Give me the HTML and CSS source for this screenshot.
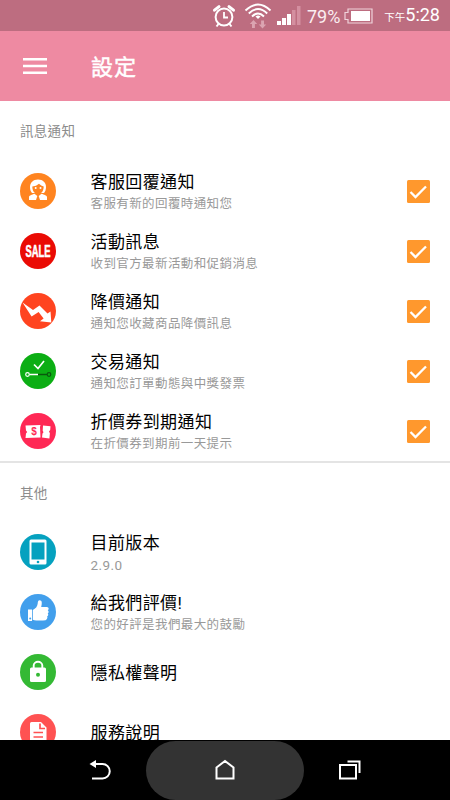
FILE: index.html
```html
<!DOCTYPE html>
<html lang="zh-Hant">
  <head>
    <meta charset="utf-8">
    <title>設定</title>
    <link rel="stylesheet" href="styles.css">
  </head>
<body>

<div class="status-bar">
  <svg class="alarm" width="24" height="24" viewBox="0 0 24 24" fill="none" stroke="#fff">
    <circle cx="12" cy="13" r="8.4" stroke-width="2"/>
    <path d="M12 8v5.5h4" stroke-width="1.8"/>
    <path d="M2.500 6.200L7 2.600M21.500 6.200L17 2.600" stroke-width="3" stroke-linecap="round"/>
    <path d="M6.500 20l-2 2.500M17.500 20l2 2.500" stroke-width="2"/>
  </svg>
  <svg class="wifi" width="28" height="27" viewBox="0 0 28 27" fill="none" stroke="#fff" stroke-width="1.900">
    <path d="M1.500 8.500Q14-3.500 26.500 8.500M4.800 11.500Q14 2.500 23.200 11.500M8 14.500Q14 8.500 20 14.500"/>
    <path d="M11.500 14.500Q14 12.500 16.500 14.500L14 17z" fill="#fff" stroke="none"/>
    <path d="M9.500 18l3.700 4h-2.300v4H8v-4H5.800zM18.500 26.500l-3.700-4h2.300v-4H20v4h2.200z" fill="#dba4b1" stroke="none"/>
  </svg>
  <svg class="signal" width="24" height="20" viewBox="0 0 24 20">
    <path d="M0 15h4v4H0zM5 12h4v7H5zM10 8h4v11h-4z" fill="#fff"/>
    <path d="M15 4h3.500v15H15zM20 0h3.500v19H20z" fill="#d48fa0"/>
  </svg>
  <span class="percent">79%</span>
  <svg class="battery" width="29" height="16" viewBox="0 0 29 16">
    <path d="M4 1h24v14H4v-3.500H1v-7h3z" fill="none" stroke="#efd3da" stroke-width="1.200"/>
    <path d="M7 3h19v10H7z" fill="#fff"/>
  </svg>
  <span class="clock"><small>下午</small>5:28</span>
</div>

<div class="toolbar">
  <svg class="menu" width="24" height="18" viewBox="0 0 24 18">
    <path d="M0 1h24v2.500H0zM0 7.700h24v2.500H0zM0 14.400h24v2.500H0z" fill="#fff"/>
  </svg>
  <h1>設定</h1>
</div>

<div class="content">
  <h2>訊息通知</h2>
  <ul class="list">
    <li>
      <svg class="icon" viewBox="0 0 36 36">
        <circle cx="18" cy="18" r="18" fill="#ff8420"/>
        <path d="M18 6.500c5 0 8 3.300 8 7.500 0 2.500-.7 4.500-2 6H12c-1.300-1.500-2-3.500-2-6 0-4.200 3-7.500 8-7.500z" fill="#fff"/>
        <path d="M12.300 13.500q4-.3 6.700-2.800 2 2.300 4.700 2.800c0 4.500-2.200 7.500-5.700 7.500s-5.700-3-5.700-7.500z" fill="#ff8420"/>
        <circle cx="15.700" cy="15" r="1" fill="#fff"/>
        <circle cx="20.500" cy="15" r="1" fill="#fff"/>
        <path d="M9 27v-3c0-1.500 3-2.200 5.500-3.200L17.300 23l-1.300 4zM27 27v-3c0-1.500-3-2.200-5.500-3.200L18.700 23l1.300 4z" fill="#fff"/>
      </svg>
      <div class="text"><h3>客服回覆通知</h3><p>客服有新的回覆時通知您</p></div>
      <svg class="check" viewBox="0 0 23 23"><rect width="23" height="23" rx="1.500" fill="#ff982d"/><path d="M3.500 12l5 5L19 6.500" fill="none" stroke="#fff" stroke-width="2.300"/></svg>
    </li>
    <li>
      <svg class="icon" viewBox="0 0 36 36">
        <circle cx="18" cy="18" r="18" fill="#ea0b04"/>
        <text class="sale" x="5.500" y="23.700" textLength="25" lengthAdjust="spacingAndGlyphs">SALE</text>
      </svg>
      <div class="text"><h3>活動訊息</h3><p>收到官方最新活動和促銷消息</p></div>
      <svg class="check" viewBox="0 0 23 23"><rect width="23" height="23" rx="1.500" fill="#ff982d"/><path d="M3.500 12l5 5L19 6.500" fill="none" stroke="#fff" stroke-width="2.300"/></svg>
    </li>
    <li>
      <svg class="icon" viewBox="0 0 36 36">
        <circle cx="18" cy="18" r="18" fill="#ff4420"/>
        <path d="M2.500 9.500L13 17l6.500-4.500 8 8 3-2 .8 11-11.300-1.300 3.600-2.700-5-6.500-7 4.500z" fill="#fff"/>
      </svg>
      <div class="text"><h3>降價通知</h3><p>通知您收藏商品降價訊息</p></div>
      <svg class="check" viewBox="0 0 23 23"><rect width="23" height="23" rx="1.500" fill="#ff982d"/><path d="M3.500 12l5 5L19 6.500" fill="none" stroke="#fff" stroke-width="2.300"/></svg>
    </li>
    <li>
      <svg class="icon" viewBox="0 0 36 36" fill="none">
        <circle cx="18" cy="18" r="18" fill="#0cae14"/>
        <path d="M14 11.500l4 4 6-7.500" stroke="#fff" stroke-width="1.700"/>
        <path d="M9.500 21.500H18" stroke="#fff" stroke-width="1.500"/>
        <circle cx="7.500" cy="21.500" r="1.800" stroke="#fff" stroke-width="1.200"/>
        <path d="M18 21.500h9" stroke="#09590d" stroke-width="1.500"/>
        <circle cx="29" cy="21.500" r="1.800" stroke="#09590d" stroke-width="1.200"/>
      </svg>
      <div class="text"><h3>交易通知</h3><p>通知您訂單動態與中獎發票</p></div>
      <svg class="check" viewBox="0 0 23 23"><rect width="23" height="23" rx="1.500" fill="#ff982d"/><path d="M3.500 12l5 5L19 6.500" fill="none" stroke="#fff" stroke-width="2.300"/></svg>
    </li>
    <li>
      <svg class="icon" viewBox="0 0 36 36">
        <circle cx="18" cy="18" r="18" fill="#ff2855"/>
        <path d="M5.500 12.500l15-.5-.5 2 .5 10.500-15 .5.500-4.500 1.200-1.500-1.200-1.500zM23 12.500l7.500.8-.3 3.700-1.200 1.500.9 1.700-.5 5.300-7.400-1 .5-4 1-1.200-.8-1.500z" fill="#fff"/>
        <text class="dollar" x="14" y="21.800" text-anchor="middle">$</text>
      </svg>
      <div class="text"><h3>折價券到期通知</h3><p>在折價券到期前一天提示</p></div>
      <svg class="check" viewBox="0 0 23 23"><rect width="23" height="23" rx="1.500" fill="#ff982d"/><path d="M3.500 12l5 5L19 6.500" fill="none" stroke="#fff" stroke-width="2.300"/></svg>
    </li>
  </ul>

  <h2 class="divided">其他</h2>
  <ul class="list">
    <li>
      <svg class="icon" viewBox="0 0 36 36">
        <circle cx="18" cy="18" r="18" fill="#05a1bf"/>
        <rect x="9.500" y="5.500" width="17" height="25" rx="1.500" fill="#fff"/>
        <path d="M11.500 8.500h13v17h-13z" fill="#05a1bf"/>
        <circle cx="18" cy="28" r="1.300" fill="#05a1bf"/>
      </svg>
      <div class="text"><h3>目前版本</h3><p class="version">2.9.0</p></div>
    </li>
    <li>
      <svg class="icon" viewBox="0 0 36 36">
        <circle cx="18" cy="18" r="18" fill="#429fec"/>
        <path d="M8 15.500h4V27H8zM12.800 16c2.700-1.300 4.700-3.500 4.900-6.500.1-2 .5-3.300 2-3.200 2.300.2 2.600 2.500 1.500 6.700h5.700c2.200.2 2.200 2.800.8 3.300 1.300.7 1.200 2.600 0 3.100.9.800.7 2.400-.5 2.900.6 1.500-.2 3.400-1.700 3.900-3.500.6-9 .6-12.700-.5z" fill="#fff"/>
        <circle cx="10.200" cy="24.500" r="1" fill="#429fec"/>
      </svg>
      <div class="text"><h3>給我們評價!</h3><p>您的好評是我們最大的鼓勵</p></div>
    </li>
    <li>
      <svg class="icon" viewBox="0 0 36 36">
        <circle cx="18" cy="18" r="18" fill="#34b934"/>
        <rect x="10" y="13.500" width="16" height="14.500" rx="1.500" fill="#fff"/>
        <path d="M13.700 14v-2.500a4.300 3.700 0 0 1 8.600 0V14" fill="none" stroke="#fff" stroke-width="1.900"/>
        <circle cx="18" cy="20.800" r="2" fill="#34b934"/>
      </svg>
      <div class="text"><h3>隱私權聲明</h3></div>
    </li>
    <li>
      <svg class="icon" viewBox="0 0 36 36">
        <circle cx="18" cy="18" r="18" fill="#ff5252"/>
        <path d="M11.500 8h9.500l5.500 5.500V28h-15a1.500 1.500 0 0 1-1.500-1.500v-17A1.500 1.500 0 0 1 11.500 8z" fill="#fff"/>
        <path d="M20 9.500v5h5M13.500 18.500h9.500M13.500 23h9.500" fill="none" stroke="#ff5252" stroke-width="1.700"/>
      </svg>
      <div class="text"><h3>服務說明</h3></div>
    </li>
  </ul>
</div>

<div class="nav-bar">
  <svg width="22" height="22" viewBox="0 0 22 22" fill="none" stroke="#fff" stroke-width="2">
    <path d="M5 5h8.500a7 7 0 0 1 0 14.500H3"/>
    <path d="M.5 5L7 1v8z" fill="#fff" stroke="none"/>
  </svg>
  <div class="home">
    <svg width="20" height="22" viewBox="0 0 20 22" fill="none" stroke="#fff" stroke-width="2">
      <path d="M1.500 8.500L10 2l8.500 6.500v11h-17z"/>
    </svg>
  </div>
  <svg width="22" height="22" viewBox="0 0 22 22" fill="none" stroke="#fff" stroke-width="2">
    <path d="M1 6h16v13.500H1zM8.500 2.500h12v11.500"/>
  </svg>
</div>

</body>
</html>
```
FILE: styles.css
```css
* {
  box-sizing: border-box;
}

body {
  margin: 0;
  height: 800px;
  display: flex;
  flex-direction: column;
  overflow: hidden;
  background: #fff;
  font-family: Roboto, "Noto Sans CJK TC", sans-serif;
}

h1, h2, h3, p, ul {
  margin: 0;
  padding: 0;
  font-weight: normal;
}

svg {
  display: block;
  flex: none;
}

.status-bar {
  flex: none;
  height: 31px;
  display: flex;
  align-items: center;
  padding: 0 10px 0 212px;
  background: #bd6d80;
  color: #fff;
  white-space: nowrap;
}

.wifi {
  margin-left: 8px;
}

.signal {
  margin-left: 5px;
}

.percent {
  width: 33px;
  margin-left: 6px;
  padding-top: 1px;
  font-size: 18px;
  color: #fbeef1;
}

.battery {
  margin-left: 4px;
}

.clock {
  margin-left: auto;
  padding-top: 2px;
  font-size: 18px;
  line-height: 30px;
}

.clock small {
  font-size: 10.500px;
}

.toolbar {
  flex: none;
  height: 70px;
  display: flex;
  align-items: center;
  padding-left: 23px;
  background: #ee8aa2;
  color: #fff;
}

.toolbar h1 {
  margin-left: 44px;
  margin-bottom: 3px;
  font-size: 22px;
  letter-spacing: 1px;
  -webkit-text-stroke: 0.500px #fff;
}

.content {
  flex: 1;
  min-height: 0;
  overflow: hidden;
}

h2 {
  height: 60px;
  padding-left: 20px;
  font-size: 13.500px;
  line-height: 61px;
  letter-spacing: 0.300px;
  color: #8c8c8c;
}

h2.divided {
  height: 61px;
  border-top: 2px solid #e4e4e4;
  line-height: 60px;
}

.list {
  list-style: none;
}

.list li {
  height: 60px;
  display: flex;
  align-items: center;
  padding: 0 20px;
}

.icon {
  width: 36px;
  height: 36px;
}

.sale {
  font: bold 16px "Liberation Sans", sans-serif;
  fill: #fff;
  stroke: #fff;
  stroke-width: 0.600px;
}

.dollar {
  font: bold 10px "Liberation Sans", sans-serif;
  fill: #ff2855;
}

.text {
  flex: 1;
  margin-left: 34.500px;
  padding-top: 2px;
}

.text h3 {
  font-size: 17px;
  line-height: 24px;
  letter-spacing: 0.400px;
  color: #000;
}

.text p {
  font-size: 12.500px;
  line-height: 20px;
  letter-spacing: 0.400px;
  color: #999;
}

.text p.version {
  font-size: 13.500px;
}

.check {
  width: 23px;
  height: 23px;
}

.nav-bar {
  flex: none;
  height: 60px;
  display: flex;
  align-items: center;
  justify-content: space-between;
  padding: 0 89px;
  background: #000;
}

.home {
  width: 158px;
  height: 59px;
  display: flex;
  align-items: center;
  justify-content: center;
  border-radius: 30px;
  background: #333;
}
```
